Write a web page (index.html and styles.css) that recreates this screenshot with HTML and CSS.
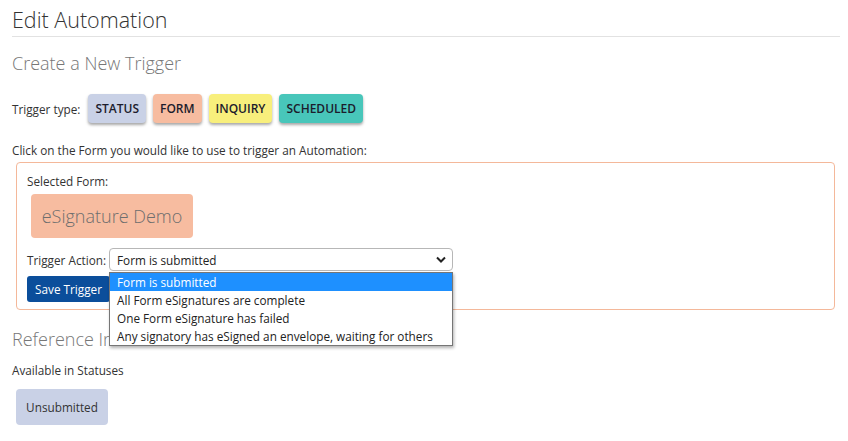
FILE: index.html
```html
<!DOCTYPE html>
<html lang="en">

<head>
    <meta charset="utf-8">
    <meta name="viewport" content="width=device-width, initial-scale=1.0">
    <title>Edit Automation</title>
    <link rel="stylesheet" href="styles.css">
</head>

<body>

    <h1 class="page_title">Edit Automation</h1>

    <h2 class="sub_title">Create a New Trigger</h2>

    <nav class="trigger_types">
        <span class="label">Trigger type:</span>
        <button class="type type_status">STATUS</button>
        <button class="type type_form">FORM</button>
        <button class="type type_inquiry">INQUIRY</button>
        <button class="type type_scheduled">SCHEDULED</button>
    </nav>

    <p class="hint">Click on the Form you would like to use to trigger an Automation:</p>

    <section class="form_box">
        <p class="label">Selected Form:</p>
        <div class="form_tile">eSignature Demo</div>

        <div class="action_row">
            <span class="label">Trigger Action:</span>
            <div class="select_wrap">
                <div class="select">
                    <span>Form is submitted</span>
                    <svg class="chevron" width="10" height="7" viewBox="0 0 10 7">
                        <path d="M1 1.5 L5 5.5 L9 1.5" fill="none" stroke="#222" stroke-width="2"/>
                    </svg>
                </div>
                <ul class="options">
                    <li class="selected">Form is submitted</li>
                    <li>All Form eSignatures are complete</li>
                    <li>One Form eSignature has failed</li>
                    <li>Any signatory has eSigned an envelope, waiting for others</li>
                </ul>
            </div>
        </div>

        <button class="save">Save Trigger</button>
    </section>

    <h2 class="sub_title ref_title">Reference Information</h2>

    <p class="label avail">Available in Statuses</p>
    <div class="chip">Unsubmitted</div>

</body></html>
```

FILE: styles.css
```css
* {
    box-sizing: border-box;
}

body {
    margin: 0;
    padding: 0 8px 0 12px;
    font-family: "Open Sans", sans-serif;
    font-size: 11.75px;
    color: #333;
    background: white;
}

.page_title {
    margin: 0;
    padding-top: 6px;
    font-size: 21.5px;
    font-weight: 300;
    line-height: 28px;
    color: #333;
    border-bottom: 1px solid #e2e2e2;
    padding-bottom: 2px;
}

.sub_title {
    margin: 14px 0 0;
    font-size: 18px;
    font-weight: 300;
    line-height: 24px;
    color: #777;
}

.label {
    color: #333;
}

.trigger_types {
    display: flex;
    align-items: center;
    gap: 7px;
    margin-top: 19px;
}

.trigger_types .label {
    margin-right: 1px;
}

.type {
    border: none;
    border-radius: 4px;
    padding: 0 7px;
    height: 29px;
    font-family: "Open Sans", sans-serif;
    font-size: 12px;
    font-weight: 600;
    color: #1c1c2c;
    box-shadow: 0 2px 3px rgba(0, 0, 0, 0.35);
}

.type_status {
    background-color: #c9d1e6;
}

.type_form {
    background-color: #f7bca0;
}

.type_inquiry {
    background-color: #f8ef7c;
}

.type_scheduled {
    background-color: #48c6ba;
}

.hint {
    margin: 19px 0 0;
    line-height: 17px;
}

.form_box {
    margin: 3px 5px 0 4px;
    border: 1px solid #f4b89a;
    border-radius: 4px;
    padding: 10px 10px 8px;
    height: 148px;
}

.form_box p {
    margin: 0;
    line-height: 17px;
}

.form_tile {
    margin: 4px 0 0 4px;
    width: 162px;
    height: 44px;
    line-height: 44px;
    text-align: center;
    background-color: #f7bca0;
    border-radius: 4px;
    font-size: 18px;
    font-weight: 300;
    color: #6e6e6e;
}

.action_row {
    display: flex;
    align-items: center;
    margin-top: 10px;
    gap: 3px;
}

.select_wrap {
    position: relative;
}

.select {
    width: 344px;
    height: 23px;
    border: 1px solid #b7b7b7;
    border-radius: 4px;
    display: flex;
    align-items: center;
    justify-content: space-between;
    padding: 0 6px 0 7px;
    color: #222;
}

.options {
    position: absolute;
    top: 24px;
    left: 0;
    width: 344px;
    margin: 0;
    padding: 0;
    list-style: none;
    background: white;
    border: 1px solid #767676;
    box-shadow: 1px 2px 3px rgba(0, 0, 0, 0.3);
    z-index: 2;
}

.options li {
    height: 18px;
    line-height: 18px;
    padding-left: 7px;
    color: #222;
}

.options .selected {
    background-color: #1e90ff;
    color: white;
}

.save {
    display: block;
    margin-top: 5px;
    height: 26px;
    width: 83px;
    border: none;
    border-radius: 3px;
    background-color: #0b4e9b;
    color: white;
    font-family: "Open Sans", sans-serif;
    font-size: 11.75px;
    padding: 0;
}

.ref_title {
    margin-top: 17px;
}

.avail {
    margin: 11px 0 0;
    line-height: 17px;
}

.chip {
    display: inline-block;
    margin: 10px 0 0 4px;
    width: 92px;
    height: 36px;
    line-height: 36px;
    text-align: center;
    background-color: #c9d1e6;
    border-radius: 4px;
}
```
